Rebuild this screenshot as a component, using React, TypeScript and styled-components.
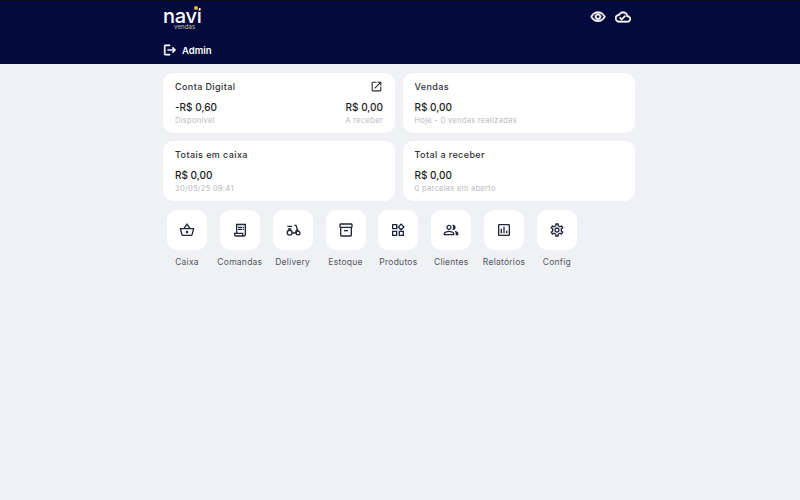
import { createGlobalStyle, styled } from "styled-components";
import {
  MdLogout,
  MdOutlineAssessment,
  MdOutlineCloudDone,
  MdOutlineInventory2,
  MdOutlineOpenInNew,
  MdOutlinePeopleAlt,
  MdOutlineReceiptLong,
  MdOutlineSettings,
  MdOutlineShoppingBasket,
  MdOutlineVisibility,
  MdOutlineWidgets,
} from "react-icons/md";

const GlobalStyle = createGlobalStyle`
  html, body {
    margin: 0;
    height: 100%;
    background-color: #eff1f5;
    font-family: Inter, "Noto Sans", "Liberation Sans", sans-serif;
  }
`;

const Header = styled.header`
  height: 63px;
  background-color: #040a3d;
  border-top: 1px solid #0a0a14;
`;

const HeaderInner = styled.div`
  width: 472px;
  padding-right: 2px;
  margin: 0 auto;
  display: flex;
  justify-content: space-between;
`;

const Brand = styled.div`
  display: flex;
  flex-direction: column;
`;

const Logo = styled.div`
  position: relative;
  width: 37px;
  height: 30px;
  color: #fff;
`;

const LogoName = styled.div`
  font-size: 20px;
  line-height: 16px;
  padding-top: 7px;
  font-weight: 500;
  letter-spacing: -0.3px;
`;

const LogoDot = styled.span`
  position: absolute;
  top: 5px;
  left: 31px;
  width: 4px;
  height: 4px;
  border-radius: 50%;
  background-color: #f2b632;
  box-shadow: 0 0 0 1px #040a3d;
`;

const LogoSub = styled.div`
  position: absolute;
  top: 22px;
  left: 11px;
  font-size: 6px;
  line-height: 7px;
  letter-spacing: 0.15px;
  color: #c9c9a8;
`;

const User = styled.div`
  display: flex;
  align-items: center;
  gap: 5px;
  margin-top: 12px;
  color: #fff;
  font-size: 9.5px;
  font-weight: 600;

  path:not([fill="none"]) {
    stroke: currentColor;
    stroke-width: 0.8;
  }
`;

const HeaderIcons = styled.div`
  display: flex;
  gap: 9px;
  margin: 8px 4px 0 0;
  color: #fff;

  path:not([fill="none"]) {
    stroke: currentColor;
    stroke-width: 0.9;
  }
`;

const Main = styled.main`
  width: 472px;
  padding-right: 2px;
  margin: 0 auto;
  padding-top: 9px;
`;

const CardGrid = styled.section`
  display: grid;
  grid-template-columns: 232px 232px;
  grid-auto-rows: 60px;
  gap: 8px 7.5px;
`;

const Card = styled.article`
  background-color: #fff;
  border-radius: 10px;
  padding: 7px 12px 0;
  box-sizing: border-box;
`;

const CardHead = styled.div`
  display: flex;
  justify-content: space-between;
  align-items: center;
  height: 13px;
  color: #2b2b33;
`;

const CardTitle = styled.h3`
  margin: 0;
  font-size: 9px;
  line-height: 13px;
  font-weight: 500;
  letter-spacing: 0.4px;
  color: #2f2f37;
`;

const Values = styled.div`
  display: flex;
  justify-content: space-between;
  margin-top: 7px;
`;

const ValueGroup = styled.div<{ $right?: boolean }>`
  text-align: ${(p) => (p.$right ? "right" : "left")};
`;

const Amount = styled.div`
  font-size: 10px;
  line-height: 14px;
  font-weight: 500;
  color: #1d1d24;
`;

const Caption = styled.div`
  font-size: 7.5px;
  line-height: 12px;
  margin-top: 1px;
  letter-spacing: 0.3px;
  color: #b9b9c0;
`;

const Shortcuts = styled.nav`
  display: flex;
  gap: 12.85px;
  margin-top: 9px;
  padding-left: 4px;
`;

const Shortcut = styled.div`
  width: 40px;
  display: flex;
  flex-direction: column;
  align-items: center;
`;

const Tile = styled.div`
  width: 40px;
  height: 40px;
  border-radius: 10px;
  background-color: #fff;
  color: #23263c;
  display: flex;
  align-items: center;
  justify-content: center;
`;

const ShortcutLabel = styled.span`
  margin-top: 7px;
  font-size: 8.5px;
  line-height: 11px;
  letter-spacing: 0.25px;
  color: #55555e;
  white-space: nowrap;
`;

function ScooterIcon({ size }: { size: number }) {
  return (
    <svg width={size} height={size} viewBox="0 0 24 24" fill="none" stroke="currentColor" strokeWidth="2">
      <circle cx="7" cy="16" r="3.6" />
      <circle cx="19.5" cy="16.5" r="2.8" />
      <path d="M3.5 6.5h7M4.5 10.5h5M14 5h2.5l3 9M10.6 16.5H15l3-5" />
    </svg>
  );
}

const shortcuts = [
  { label: "Caixa", icon: MdOutlineShoppingBasket },
  { label: "Comandas", icon: MdOutlineReceiptLong },
  { label: "Delivery", icon: ScooterIcon },
  { label: "Estoque", icon: MdOutlineInventory2 },
  { label: "Produtos", icon: MdOutlineWidgets },
  { label: "Clientes", icon: MdOutlinePeopleAlt },
  { label: "Relatórios", icon: MdOutlineAssessment },
  { label: "Config", icon: MdOutlineSettings },
];

export default function App() {
  return (
    <>
      <GlobalStyle />
      <Header>
        <HeaderInner>
          <Brand>
            <Logo>
              <LogoName>navi</LogoName>
              <LogoDot />
              <LogoSub>vendas</LogoSub>
            </Logo>
            <User>
              <MdLogout size={14} />
              Admin
            </User>
          </Brand>
          <HeaderIcons>
            <MdOutlineVisibility size={16} />
            <MdOutlineCloudDone size={16} />
          </HeaderIcons>
        </HeaderInner>
      </Header>
      <Main>
        <CardGrid>
          <Card>
            <CardHead>
              <CardTitle>Conta Digital</CardTitle>
              <MdOutlineOpenInNew size={13} />
            </CardHead>
            <Values>
              <ValueGroup>
                <Amount>-R$ 0,60</Amount>
                <Caption>Disponível</Caption>
              </ValueGroup>
              <ValueGroup $right>
                <Amount>R$ 0,00</Amount>
                <Caption>A receber</Caption>
              </ValueGroup>
            </Values>
          </Card>
          <Card>
            <CardHead>
              <CardTitle>Vendas</CardTitle>
            </CardHead>
            <Values>
              <ValueGroup>
                <Amount>R$ 0,00</Amount>
                <Caption>Hoje - 0 vendas realizadas</Caption>
              </ValueGroup>
            </Values>
          </Card>
          <Card>
            <CardHead>
              <CardTitle>Totais em caixa</CardTitle>
            </CardHead>
            <Values>
              <ValueGroup>
                <Amount>R$ 0,00</Amount>
                <Caption>30/05/25 09:41</Caption>
              </ValueGroup>
            </Values>
          </Card>
          <Card>
            <CardHead>
              <CardTitle>Total a receber</CardTitle>
            </CardHead>
            <Values>
              <ValueGroup>
                <Amount>R$ 0,00</Amount>
                <Caption>0 parcelas em aberto</Caption>
              </ValueGroup>
            </Values>
          </Card>
        </CardGrid>
        <Shortcuts>
          {shortcuts.map(({ label, icon: Icon }) => (
            <Shortcut key={label}>
              <Tile>
                <Icon size={16} />
              </Tile>
              <ShortcutLabel>{label}</ShortcutLabel>
            </Shortcut>
          ))}
        </Shortcuts>
      </Main>
    </>
  );
}
